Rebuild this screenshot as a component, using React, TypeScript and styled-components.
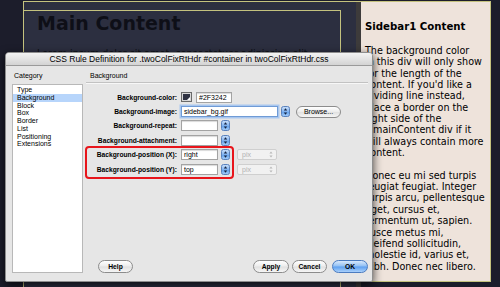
import React from "react";
import styled, { createGlobalStyle } from "styled-components";

const OLIVE = "#c4c27e";

const GlobalStyle = createGlobalStyle`
  * { box-sizing: border-box; }
  html, body { margin: 0; padding: 0; background: #1c1d2b; }
  body { overflow: hidden; }
`;

// design view behind the dialog
const Page = styled.div`
  position: relative;
  display: flex;
  width: 500px;
  height: 287px;
  overflow: hidden;
  background: #1c1d2b;
`;

const Gutter = styled.div<{ $w?: number }>`
  flex: ${(p) => (p.$w ? `0 0 ${p.$w}px` : "1")};
`;

const Container = styled.div`
  display: flex;
  align-items: flex-start;
  margin-top: 1px;
  border-top: 1px solid ${OLIVE};
  border-left: 1px solid ${OLIVE};
`;

const MainColumn = styled.div`
  width: 332px;
  height: 286px;
  padding-top: 8px;
  background: #2c2f40;
`;

const MainBox = styled.div`
  width: 317px;
  height: 100%;
  padding: 1px 0 0 13px;
  border-top: 1px solid ${OLIVE};
  border-right: 1px solid ${OLIVE};
  font-family: "DejaVu Sans", Verdana, sans-serif;
  color: #0e0f17;
`;

const MainTitle = styled.h1`
  margin: 0;
  font-size: 19px;
  line-height: 22px;
  font-weight: bold;
`;

const MainText = styled.p`
  margin: 14px 0 0;
  font-size: 9.6px;
  line-height: 11.4px;
  white-space: nowrap;
`;

const Divider = styled.div`
  width: 5px;
  height: 286px;
  background: #3d3b3b;
`;

const Sidebar = styled.div`
  width: 130px;
  height: 280px;
  padding: 19px 0 0 4px;
  background: #eee3db;
  border-right: 1px solid ${OLIVE};
  border-bottom: 1px solid ${OLIVE};
  font-family: "DejaVu Sans", Verdana, sans-serif;
  color: #000;
`;

const SidebarTitle = styled.h3`
  margin: 0;
  font-size: 10.2px;
  line-height: 12px;
  font-weight: bold;
  white-space: nowrap;
`;

const SidebarText = styled.p`
  margin: 12px 0 0;
  font-size: 9.6px;
  line-height: 11.35px;
  white-space: nowrap;
  & + & {
    margin-top: 11.35px;
  }
`;

// the dialog window
const Dialog = styled.div`
  position: absolute;
  left: 5px;
  top: 52px;
  width: 368px;
  height: 230px;
  display: flex;
  flex-direction: column;
  background: #e6e6e6;
  border: 1px solid #8e8e8e;
  border-radius: 4px 4px 2px 2px;
  box-shadow: 0 3px 10px rgba(0, 0, 0, 0.75);
  font-family: "Liberation Sans", Arial, sans-serif;
  color: #000;
  overflow: hidden;
`;

const TitleBar = styled.div`
  flex: 0 0 13px;
  background: linear-gradient(#f3f3f3, #d3d3d3);
  border-bottom: 1px solid #9a9a9a;
  text-align: center;
  font-size: 8.5px;
  line-height: 12px;
  white-space: nowrap;
`;

const DialogBody = styled.div`
  flex: 1;
  display: flex;
  padding: 0 4px 8px 6px;
`;

const CategoryColumn = styled.div`
  width: 71px;
  display: flex;
  flex-direction: column;
`;

const SmallHeading = styled.div`
  height: 18px;
  padding: 6px 0 0 2px;
  font-size: 7px;
  line-height: 8px;
`;

const ListBox = styled.div`
  flex: 1;
  padding-top: 1px;
  background: #fff;
  border: 1px solid #b8b8b8;
`;

const ListItem = styled.div<{ $selected?: boolean }>`
  height: 7.75px;
  padding-left: 4px;
  font-size: 7px;
  line-height: 7.75px;
  background: ${(p) => (p.$selected ? "#b7d5fb" : "transparent")};
`;

const PanelColumn = styled.div`
  flex: 1;
  margin-left: 3px;
  display: flex;
  flex-direction: column;
`;

const PanelHeader = styled.div`
  height: 17px;
  padding: 6px 0 0 4px;
  font-size: 7px;
  line-height: 8px;
  border-bottom: 1px solid #c2c2c2;
  box-shadow: 0 1px 0 #f7f7f7;
`;

const Form = styled.div`
  position: relative;
  margin-top: 7px;
`;

const Row = styled.div`
  display: grid;
  grid-template-columns: 91px 1fr;
  column-gap: 4px;
  align-items: center;
  height: 14.4px;
`;

const Label = styled.div`
  text-align: right;
  font-size: 6.7px;
  font-weight: bold;
  white-space: nowrap;
`;

const Controls = styled.div`
  display: flex;
  align-items: center;
  gap: 3px;
`;

const TextField = styled.div<{ $w: number; $focus?: boolean }>`
  width: ${(p) => p.$w}px;
  height: 11px;
  padding-left: 2px;
  background: #fff;
  border: 1px solid ${(p) => (p.$focus ? "#6f9bd6" : "#a3a3a3")};
  box-shadow: ${(p) =>
    p.$focus ? "0 0 0 1.5px #a9c7ef" : "inset 0 1px 1px rgba(0,0,0,0.15)"};
  font-size: 7px;
  line-height: 9px;
  white-space: nowrap;
`;

const Swatch = styled.div`
  position: relative;
  width: 11px;
  height: 10px;
  margin-right: 1px;
  background: #2f3242;
  border: 1px solid #6a6a6a;
  box-shadow: inset 0 0 0 1px #d8d8d8;
  &::after {
    content: "";
    position: absolute;
    right: 1px;
    bottom: 1px;
    border-left: 3px solid transparent;
    border-bottom: 3px solid #fff;
  }
`;

const PillButton = styled.div<{ $w: number; $primary?: boolean; $gap?: number }>`
  width: ${(p) => p.$w}px;
  height: 13px;
  margin-left: ${(p) => p.$gap ?? 0}px;
  border-radius: 7px;
  border: 1px solid ${(p) => (p.$primary ? "#4b7cc0" : "#8c8c8c")};
  background: ${(p) =>
    p.$primary
      ? "linear-gradient(#d7e8fc, #8fbff4 48%, #5c9ff0 52%, #a8d0fb)"
      : "linear-gradient(#ffffff, #ececec 48%, #e0e0e0 52%, #f6f6f6)"};
  text-align: center;
  font-size: 6.7px;
  font-weight: bold;
  line-height: 11px;
  white-space: nowrap;
`;

const BrowseButton = styled(PillButton)`
  height: 12px;
  font-weight: normal;
  font-size: 7px;
  line-height: 10px;
`;

const DisabledSelect = styled.div`
  position: relative;
  width: 40px;
  height: 11px;
  margin-left: 4px;
  padding-left: 4px;
  border: 1px solid #cfcfcf;
  border-radius: 2px;
  background: #f1f1f1;
  color: #b2b2b2;
  font-size: 7px;
  line-height: 9px;
  & > svg {
    position: absolute;
    right: 3px;
    top: 1px;
  }
`;

const Highlight = styled.div`
  position: absolute;
  left: -1px;
  top: 56px;
  width: 149px;
  height: 33px;
  border: 2px solid #e8151b;
  border-radius: 4px;
  pointer-events: none;
`;

const ButtonRow = styled.div`
  margin-top: auto;
  display: flex;
  align-items: center;
  height: 14px;
`;

const Spacer = styled.div`
  flex: 1;
`;

const Stepper = () => (
  <svg width="9" height="11" viewBox="0 0 9 11">
    <defs>
      <linearGradient id="stp" x1="0" y1="0" x2="0" y2="1">
        <stop offset="0" stopColor="#cfe2fa" />
        <stop offset="0.5" stopColor="#82b3ef" />
        <stop offset="0.52" stopColor="#5e9de9" />
        <stop offset="1" stopColor="#a9d0fa" />
      </linearGradient>
    </defs>
    <rect x="0.5" y="0.5" width="8" height="10" rx="2" fill="url(#stp)" stroke="#5a82bd" />
    <path d="M4.5 2.2 L6.2 4.4 L2.8 4.4 Z" fill="#15223f" />
    <path d="M2.8 6.6 L6.2 6.6 L4.5 8.8 Z" fill="#15223f" />
  </svg>
);

const GrayArrows = () => (
  <svg width="4" height="7" viewBox="0 0 4 7">
    <path d="M2 0.5 L3.6 2.6 L0.4 2.6 Z" fill="#b8b8b8" />
    <path d="M0.4 4.4 L3.6 4.4 L2 6.5 Z" fill="#b8b8b8" />
  </svg>
);

const categories = [
  "Type",
  "Background",
  "Block",
  "Box",
  "Border",
  "List",
  "Positioning",
  "Extensions",
];

const sidebarOne = [
  "The background color",
  "in this div will only show",
  "for the length of the",
  "content. If you'd like a",
  "dividing line instead,",
  "place a border on the",
  "right side of the",
  "#mainContent div if it",
  "will always contain more",
  "content.",
];

const sidebarTwo = [
  "Donec eu mi sed turpis",
  "feugiat feugiat. Integer",
  "turpis arcu, pellentesque",
  "eget, cursus et,",
  "fermentum ut, sapien.",
  "Fusce metus mi,",
  "eleifend sollicitudin,",
  "molestie id, varius et,",
  "nibh. Donec nec libero.",
];

const lines = (arr: string[]) =>
  arr.map((l, i) => (
    <React.Fragment key={i}>
      {l}
      {i < arr.length - 1 && <br />}
    </React.Fragment>
  ));

const App = () => {
  return (
    <>
      <GlobalStyle />
      <Page>
        <Gutter $w={23} />
        <Container>
          <MainColumn>
            <MainBox>
              <MainTitle>Main Content</MainTitle>
              <MainText>Lorem ipsum dolor sit amet, consectetuer adipiscing elit</MainText>
            </MainBox>
          </MainColumn>
          <Divider />
          <Sidebar>
            <SidebarTitle>Sidebar1 Content</SidebarTitle>
            <SidebarText>{lines(sidebarOne)}</SidebarText>
            <SidebarText>{lines(sidebarTwo)}</SidebarText>
          </Sidebar>
        </Container>
        <Gutter />

        <Dialog>
          <TitleBar>CSS Rule Definition for .twoColFixRtHdr #container in twoColFixRtHdr.css</TitleBar>
          <DialogBody>
            <CategoryColumn>
              <SmallHeading>Category</SmallHeading>
              <ListBox>
                {categories.map((c) => (
                  <ListItem key={c} $selected={c === "Background"}>
                    {c}
                  </ListItem>
                ))}
              </ListBox>
            </CategoryColumn>

            <PanelColumn>
              <PanelHeader>Background</PanelHeader>
              <Form>
                <Row>
                  <Label>Background-color:</Label>
                  <Controls>
                    <Swatch />
                    <TextField $w={36}>#2F3242</TextField>
                  </Controls>
                </Row>
                <Row>
                  <Label>Background-image:</Label>
                  <Controls>
                    <TextField $w={97} $focus>sidebar_bg.gif</TextField>
                    <Stepper />
                    <BrowseButton $w={45} $gap={3}>Browse...</BrowseButton>
                  </Controls>
                </Row>
                <Row>
                  <Label>Background-repeat:</Label>
                  <Controls>
                    <TextField $w={37} />
                    <Stepper />
                  </Controls>
                </Row>
                <Row>
                  <Label>Background-attachment:</Label>
                  <Controls>
                    <TextField $w={37} />
                    <Stepper />
                  </Controls>
                </Row>
                <Row>
                  <Label>Background-position (X):</Label>
                  <Controls>
                    <TextField $w={37}>right</TextField>
                    <Stepper />
                    <DisabledSelect>
                      pix
                      <GrayArrows />
                    </DisabledSelect>
                  </Controls>
                </Row>
                <Row>
                  <Label>Background-position (Y):</Label>
                  <Controls>
                    <TextField $w={37}>top</TextField>
                    <Stepper />
                    <DisabledSelect>
                      pix
                      <GrayArrows />
                    </DisabledSelect>
                  </Controls>
                </Row>
                <Highlight />
              </Form>

              <ButtonRow>
                <PillButton $w={35} $gap={12}>Help</PillButton>
                <Spacer />
                <PillButton $w={36}>Apply</PillButton>
                <PillButton $w={35} $gap={3}>Cancel</PillButton>
                <PillButton $w={36} $gap={5} $primary>OK</PillButton>
              </ButtonRow>
            </PanelColumn>
          </DialogBody>
        </Dialog>
      </Page>
    </>
  );
};

export default App;
